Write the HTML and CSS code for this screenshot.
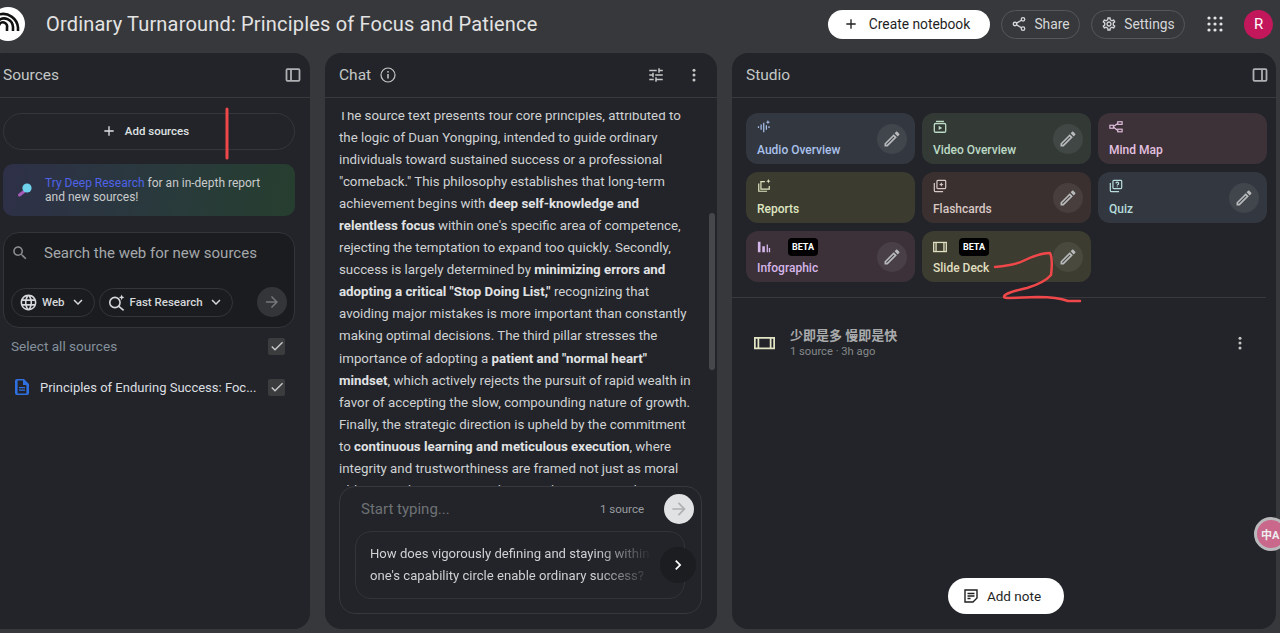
FILE: index.html
```html
<!DOCTYPE html>
<html lang="en">
<head>
    <meta charset="UTF-8">
    <title>Ordinary Turnaround: Principles of Focus and Patience</title>
    <link rel="stylesheet" href="styles.css">
</head>
<body>

    <svg class="defs" width="0" height="0">
        <symbol id="i-edit" viewBox="0 0 24 24"><path d="M14.06 9.02l.92.92L5.92 19H5v-.92l9.06-9.06M17.66 3c-.25 0-.51.1-.7.29l-1.83 1.83 3.75 3.75 1.83-1.83c.39-.39.39-1.02 0-1.41l-2.34-2.34c-.2-.2-.45-.29-.71-.29zm-3.6 3.19L3 17.25V21h3.75L17.81 9.94l-3.75-3.75z"/></symbol>
        <symbol id="i-check" viewBox="0 0 24 24"><path d="M9 16.17L4.83 12l-1.42 1.41L9 19 21 7l-1.41-1.41z"/></symbol>
        <symbol id="i-arrow" viewBox="0 0 24 24"><path d="M12 4l-1.41 1.41L16.17 11H4v2h12.17l-5.58 5.59L12 20l8-8z"/></symbol>
        <symbol id="i-down" viewBox="0 0 24 24"><path d="M16.59 8.59L12 13.17 7.41 8.59 6 10l6 6 6-6z"/></symbol>
        <symbol id="i-plus" viewBox="0 0 24 24"><path d="M19 13h-6v6h-2v-6H5v-2h6V5h2v6h6v2z"/></symbol>
        <symbol id="i-dots" viewBox="0 0 24 24"><circle cx="12" cy="5.5" r="2"/><circle cx="12" cy="12" r="2"/><circle cx="12" cy="18.5" r="2"/></symbol>
        <symbol id="i-slides" viewBox="0 0 24 16"><path fill-rule="evenodd" d="M0 1h24v14H0zM2 3v10h2V3zm4 0v10h12V3zm14 0v10h2V3z"/></symbol>
    </svg>

    <header class="topbar">
        <div class="logo">
            <svg viewBox="0 0 34 34" width="34" height="34" fill="none" stroke="#111" stroke-width="2.6">
                <path d="M8 13a9 9 0 0 1 14 7v4"/>
                <path d="M8 7.500a15 15 0 0 1 19 13v3.500"/>
                <path d="M8 18.500a4 4 0 0 1 8 2v3.500"/>
            </svg>
        </div>
        <h1 class="title">Ordinary Turnaround: Principles of Focus and Patience</h1>
        <button class="btn-create"><svg class="ic-16"><use href="#i-plus"/></svg>Create notebook</button>
        <button class="btn-outline btn-share">
            <svg class="ic-16" viewBox="0 0 24 24" fill="none" stroke="currentColor" stroke-width="2"><circle cx="18" cy="5" r="2.6"/><circle cx="6" cy="12" r="2.6"/><circle cx="18" cy="19" r="2.6"/><path d="M8.3 10.7l7.4-4.4M8.3 13.3l7.4 4.4"/></svg>
            Share
        </button>
        <button class="btn-outline btn-settings">
            <svg class="ic-16" viewBox="0 0 24 24"><path d="M19.43 12.98c.04-.32.07-.64.07-.98 0-.34-.03-.66-.07-.98l2.11-1.65c.19-.15.24-.42.12-.64l-2-3.46c-.09-.16-.26-.25-.44-.25-.06 0-.12.01-.17.03l-2.49 1c-.52-.4-1.08-.73-1.69-.98l-.38-2.65C14.46 2.18 14.25 2 14 2h-4c-.25 0-.46.18-.49.42l-.38 2.65c-.61.25-1.17.59-1.69.98l-2.49-1c-.06-.02-.12-.03-.18-.03-.17 0-.34.09-.43.25l-2 3.46c-.13.22-.07.49.12.64l2.11 1.65c-.04.32-.07.65-.07.98 0 .33.03.66.07.98l-2.11 1.65c-.19.15-.24.42-.12.64l2 3.46c.09.16.26.25.44.25.06 0 .12-.01.17-.03l2.49-1c.52.4 1.08.73 1.69.98l.38 2.65c.03.24.24.42.49.42h4c.25 0 .46-.18.49-.42l.38-2.65c.61-.25 1.17-.59 1.69-.98l2.49 1c.06.02.12.03.18.03.17 0 .34-.09.43-.25l2-3.46c.12-.22.07-.49-.12-.64l-2.11-1.65zm-1.98-1.71c.04.31.05.52.05.73 0 .21-.02.43-.05.73l-.14 1.13.89.7 1.08.84-.7 1.21-1.27-.51-1.04-.42-.9.68c-.43.32-.84.56-1.25.73l-1.06.43-.16 1.13-.2 1.35h-1.4l-.19-1.35-.16-1.13-1.06-.43c-.43-.18-.83-.41-1.23-.71l-.91-.7-1.06.43-1.27.51-.7-1.21 1.08-.84.89-.7-.14-1.13c-.03-.31-.05-.54-.05-.74s.02-.43.05-.73l.14-1.13-.89-.7-1.08-.84.7-1.21 1.27.51 1.04.42.9-.68c.43-.32.84-.56 1.25-.73l1.06-.43.16-1.13.2-1.35h1.39l.19 1.35.16 1.13 1.06.43c.43.18.83.41 1.23.71l.91.7 1.06-.43 1.27-.51.7 1.21-1.07.85-.89.7.14 1.13zM12 8c-2.21 0-4 1.79-4 4s1.79 4 4 4 4-1.79 4-4-1.79-4-4-4zm0 6c-1.1 0-2-.9-2-2s.9-2 2-2 2 .9 2 2-.9 2-2 2z"/></svg>
            Settings
        </button>
        <svg class="apps" viewBox="0 0 16 16" width="16" height="16"><circle cx="2" cy="2" r="1.6"/><circle cx="8" cy="2" r="1.6"/><circle cx="14" cy="2" r="1.6"/><circle cx="2" cy="8" r="1.6"/><circle cx="8" cy="8" r="1.6"/><circle cx="14" cy="8" r="1.6"/><circle cx="2" cy="14" r="1.6"/><circle cx="8" cy="14" r="1.6"/><circle cx="14" cy="14" r="1.6"/></svg>
        <div class="avatar">R</div>
    </header>

    <main class="panels">
        <!-- sources -->
        <section class="panel sources">
            <div class="panel-head">
                <h2>Sources</h2>
                <svg class="ic-head" viewBox="0 0 16 16" fill="none" stroke="currentColor" stroke-width="1.8"><rect x="1.5" y="2.2" width="13" height="11.6" rx="1"/><path d="M6 2.2v11.6"/></svg>
            </div>
            <div class="sources-body">
                <button class="add-sources"><svg class="ic-16"><use href="#i-plus"/></svg>Add sources</button>
                <div class="promo">
                    <svg class="promo-icon" viewBox="0 0 16 16" width="16" height="16"><path d="M7 9.5L2.5 13" stroke="#a45bb8" stroke-width="3" stroke-linecap="round"/><circle cx="10" cy="6" r="4.6" fill="#6fd3ee"/></svg>
                    <p><span class="promo-link">Try Deep Research</span> for an in-depth report<br>and new sources!</p>
                </div>
                <div class="search-box">
                    <div class="search-line">
                        <svg class="ic-search" viewBox="0 0 24 24"><path d="M15.5 14h-.79l-.28-.27C15.41 12.59 16 11.11 16 9.5 16 5.91 13.09 3 9.5 3S3 5.91 3 9.5 5.91 16 9.5 16c1.61 0 3.09-.59 4.23-1.57l.27.28v.79l5 4.99L20.49 19l-4.99-5zm-6 0C7.01 14 5 11.99 5 9.5S7.01 5 9.5 5 14 7.01 14 9.5 11.99 14 9.5 14z"/></svg>
                        <span>Search the web for new sources</span>
                    </div>
                    <div class="search-tools">
                        <button class="chip">
                            <svg class="ic-19" viewBox="0 0 24 24"><path d="M11.99 2C6.47 2 2 6.48 2 12s4.47 10 9.99 10C17.52 22 22 17.52 22 12S17.52 2 11.99 2zm6.93 6h-2.95c-.32-1.25-.78-2.45-1.38-3.56 1.84.63 3.37 1.91 4.33 3.56zM12 4.04c.83 1.2 1.48 2.53 1.91 3.96h-3.82c.43-1.43 1.08-2.76 1.91-3.96zM4.26 14C4.1 13.36 4 12.69 4 12s.1-1.36.26-2h3.38c-.08.66-.14 1.32-.14 2 0 .68.06 1.34.14 2H4.26zm.82 2h2.95c.32 1.25.78 2.45 1.38 3.56-1.84-.63-3.37-1.9-4.33-3.56zm2.95-8H5.08c.96-1.66 2.49-2.93 4.33-3.56C8.81 5.55 8.35 6.75 8.03 8zM12 19.96c-.83-1.2-1.48-2.53-1.91-3.96h3.82c-.43 1.43-1.08 2.76-1.91 3.96zM14.34 14H9.66c-.09-.66-.16-1.32-.16-2 0-.68.07-1.35.16-2h4.68c.09.65.16 1.32.16 2 0 .68-.07 1.34-.16 2zm.25 5.56c.6-1.11 1.06-2.31 1.38-3.56h2.95c-.96 1.65-2.49 2.93-4.33 3.56zM16.36 14c.08-.66.14-1.32.14-2 0-.68-.06-1.34-.14-2h3.38c.16.64.26 1.31.26 2s-.1 1.36-.26 2h-3.38z"/></svg>
                            Web
                            <svg class="ic-18"><use href="#i-down"/></svg>
                        </button>
                        <button class="chip">
                            <svg class="ic-19" viewBox="0 0 24 24" fill="none" stroke="currentColor" stroke-width="2"><circle cx="10" cy="12" r="6.5"/><path d="M15 17l6 5"/><path d="M18.5 2l1 2.5L22 5.5l-2.5 1-1 2.5-1-2.5-2.5-1 2.5-1z" fill="currentColor" stroke="none"/></svg>
                            Fast Research
                            <svg class="ic-18"><use href="#i-down"/></svg>
                        </button>
                        <button class="go"><svg class="ic-18"><use href="#i-arrow"/></svg></button>
                    </div>
                </div>
                <div class="check-row select-all">
                    <span>Select all sources</span>
                    <span class="checkbox"><svg class="ic-16"><use href="#i-check"/></svg></span>
                </div>
                <div class="check-row source-item">
                    <svg class="doc" viewBox="0 0 14 16" width="14" height="16"><path fill-rule="evenodd" d="M2 0h7l5 5v9a2 2 0 0 1-2 2H2a2 2 0 0 1-2-2V2a2 2 0 0 1 2-2zm.6 1.6v12.8h8.8V6H8V1.6zM4 8h6v1.2H4zm0 2.6h6v1.2H4z"/></svg>
                    <span class="source-name">Principles of Enduring Success: Foc...</span>
                    <span class="checkbox"><svg class="ic-16"><use href="#i-check"/></svg></span>
                </div>
            </div>
        </section>

        <!-- chat -->
        <section class="panel chat">
            <div class="panel-head">
                <h2>Chat</h2>
                <svg class="ic-info" viewBox="0 0 16 16" fill="none" stroke="currentColor" stroke-width="1.2"><circle cx="8" cy="8" r="7"/><path d="M8 7v4.4" stroke-width="1.5"/><circle cx="8" cy="4.8" r=".9" fill="currentColor" stroke="none"/></svg>
                <svg class="ic-tune" viewBox="0 0 24 24"><path d="M3 17v2h6v-2H3zM3 5v2h10V5H3zm10 16v-2h8v-2h-8v-2h-2v6h2zM7 9v2H3v2h4v2h2V9H7zm14 4v-2H11v2h10zm-6-4h2V7h4V5h-4V3h-2v6z"/></svg>
                <svg class="ic-dots"><use href="#i-dots"/></svg>
            </div>
            <div class="chat-scroll">
                <p class="chat-text">
                    The source text presents four core principles, attributed to<br>
                    the logic of Duan Yongping, intended to guide ordinary<br>
                    individuals toward sustained success or a professional<br>
                    "comeback." This philosophy establishes that long-term<br>
                    achievement begins with <b>deep self-knowledge and</b><br>
                    <b>relentless focus</b> within one's specific area of competence,<br>
                    rejecting the temptation to expand too quickly. Secondly,<br>
                    success is largely determined by <b>minimizing errors and</b><br>
                    <b>adopting a critical "Stop Doing List,"</b> recognizing that<br>
                    avoiding major mistakes is more important than constantly<br>
                    making optimal decisions. The third pillar stresses the<br>
                    importance of adopting a <b>patient and "normal heart"</b><br>
                    <b>mindset</b>, which actively rejects the pursuit of rapid wealth in<br>
                    favor of accepting the slow, compounding nature of growth.<br>
                    Finally, the strategic direction is upheld by the commitment<br>
                    to <b>continuous learning and meticulous execution</b>, where<br>
                    integrity and trustworthiness are framed not just as moral<br>
                    obligations but as essential assets that compound over time.
                </p>
                <div class="scroll-thumb"></div>
            </div>
            <div class="composer">
                <div class="composer-top">
                    <span class="placeholder">Start typing...</span>
                    <span class="source-count">1 source</span>
                    <button class="send"><svg class="ic-20"><use href="#i-arrow"/></svg></button>
                </div>
                <div class="suggestion">
                    <p>How does vigorously defining and staying within<br>one's capability circle enable ordinary success?</p>
                    <button class="next"><svg class="ic-20" viewBox="0 0 24 24"><path d="M10 6L8.59 7.41 13.17 12l-4.58 4.59L10 18l6-6z"/></svg></button>
                </div>
            </div>
        </section>

        <!-- studio -->
        <section class="panel studio">
            <div class="panel-head">
                <h2>Studio</h2>
                <svg class="ic-head" viewBox="0 0 16 16" fill="none" stroke="currentColor" stroke-width="1.8"><rect x="1.5" y="2.2" width="13" height="11.6" rx="1"/><path d="M10 2.2v11.6"/></svg>
            </div>
            <div class="tiles">
                <div class="tile t-audio">
                    <div class="tile-main">
                        <div class="tile-top"><svg class="tile-icon" viewBox="0 0 16 16"><path d="M1 7h1.4v2H1zm3-2h1.4v6H4zm3-2h1.4v11H7zm3 3h1.4v5H10zm3 1h1.4v2H13zM12.500 0l.7 1.800L15 2.500l-1.800.7-.7 1.800-.7-1.800L10 2.500l1.800-.7z"/></svg></div>
                        <span class="tile-label">Audio Overview</span>
                    </div>
                    <button class="edit"><svg class="ic-20"><use href="#i-edit"/></svg></button>
                </div>
                <div class="tile t-video">
                    <div class="tile-main">
                        <div class="tile-top"><svg class="tile-icon" viewBox="0 0 16 16" fill="none" stroke="currentColor" stroke-width="1.500"><rect x="1.500" y="4" width="13" height="10" rx="1.500"/><path d="M3.500 1.500h9"/><path d="M6.500 6.500v5l4-2.500z" fill="currentColor" stroke="none"/></svg></div>
                        <span class="tile-label">Video Overview</span>
                    </div>
                    <button class="edit"><svg class="ic-20"><use href="#i-edit"/></svg></button>
                </div>
                <div class="tile t-mind">
                    <div class="tile-main">
                        <div class="tile-top"><svg class="tile-icon" viewBox="0 0 16 16" fill="none" stroke="currentColor" stroke-width="1.300"><rect x="1" y="6" width="4" height="3.400"/><rect x="10" y="2" width="5" height="3"/><rect x="10" y="10.500" width="5" height="3"/><path d="M5 7.500L10 4M5 8l5 4"/></svg></div>
                        <span class="tile-label">Mind Map</span>
                    </div>
                </div>
                <div class="tile t-reports">
                    <div class="tile-main">
                        <div class="tile-top"><svg class="tile-icon" viewBox="0 0 16 16" fill="none" stroke="currentColor" stroke-width="1.400"><path d="M9 3H4.500v8.500H14V8"/><path d="M2 5v9h9.500"/><path d="M13 0l.7 1.800 1.800.7-1.800.7-.7 1.800-.7-1.800-1.800-.7 1.800-.7z" fill="currentColor" stroke="none"/></svg></div>
                        <span class="tile-label">Reports</span>
                    </div>
                </div>
                <div class="tile t-flash">
                    <div class="tile-main">
                        <div class="tile-top"><svg class="tile-icon" viewBox="0 0 16 16" fill="none" stroke="currentColor" stroke-width="1.400"><rect x="4.500" y="1.500" width="10" height="9.500" rx="1"/><path d="M1.500 4.500V13a1.500 1.500 0 0 0 1.500 1.500h8.500"/><path d="M9.500 3.800l.8 1.700 1.700.8-1.700.8-.8 1.700-.8-1.700L7 6.300l1.700-.8z" fill="currentColor" stroke="none"/></svg></div>
                        <span class="tile-label">Flashcards</span>
                    </div>
                    <button class="edit"><svg class="ic-20"><use href="#i-edit"/></svg></button>
                </div>
                <div class="tile t-quiz">
                    <div class="tile-main">
                        <div class="tile-top"><svg class="tile-icon" viewBox="0 0 16 16" fill="none" stroke="currentColor" stroke-width="1.400"><rect x="4.500" y="1.500" width="10" height="9.500" rx="1"/><path d="M1.500 4.500V13a1.500 1.500 0 0 0 1.500 1.500h8.500"/><path d="M8 5a1.500 1.500 0 1 1 2 1.500c-.4.200-.5.500-.5 1"/><path d="M9.500 8.500v1"/></svg></div>
                        <span class="tile-label">Quiz</span>
                    </div>
                    <button class="edit"><svg class="ic-20"><use href="#i-edit"/></svg></button>
                </div>
                <div class="tile t-info">
                    <div class="tile-main">
                        <div class="tile-top">
                            <svg class="tile-icon" viewBox="0 0 16 16"><path d="M1 2h3v12H1zm5 5h3v7H6zm5-2h1.500v9H11zm2.500 4H15v5h-1.500z"/></svg>
                            <span class="beta">BETA</span>
                        </div>
                        <span class="tile-label">Infographic</span>
                    </div>
                    <button class="edit"><svg class="ic-20"><use href="#i-edit"/></svg></button>
                </div>
                <div class="tile t-slide">
                    <div class="tile-main">
                        <div class="tile-top">
                            <svg class="tile-icon" viewBox="0 0 16 16" fill="none" stroke="currentColor" stroke-width="1.500"><rect x=".8" y="2.800" width="14.400" height="10.400"/><path d="M3.500 2.800v10.400M12.500 2.800v10.400"/></svg>
                            <span class="beta">BETA</span>
                        </div>
                        <span class="tile-label">Slide Deck</span>
                    </div>
                    <button class="edit"><svg class="ic-20"><use href="#i-edit"/></svg></button>
                </div>
            </div>
            <div class="studio-rule"></div>
            <div class="note-row">
                <svg class="note-icon"><use href="#i-slides"/></svg>
                <div class="note-text">
                    <div class="note-title">少即是多 慢即是快</div>
                    <div class="note-sub">1 source · 3h ago</div>
                </div>
                <svg class="ic-dots"><use href="#i-dots"/></svg>
            </div>
            <button class="add-note">
                <svg class="ic-16" viewBox="0 0 16 16" fill="none" stroke="currentColor" stroke-width="1.400"><path d="M2 2h12v8l-4 4H2z"/><path d="M4.500 5.500h7M4.500 8h7M4.500 10.500h3"/></svg>
                Add note
            </button>
        </section>
    </main>

    <!-- translate extension bubble -->
    <div class="translate-bubble"><span>中A</span></div>

    <!-- red pen marks on the screenshot -->
    <svg class="pen-marks" viewBox="0 0 1280 633" width="1280" height="633" fill="none" stroke="#f0484a" stroke-linecap="round" stroke-linejoin="round">
        <path d="M227 109v49" stroke-width="3"/>
        <path d="M995 267c10-1 20-2 28-6 10-5 20-8 27-8 2 4 2 14 1 22-6 7-14 10-24 13-8 2-16 3-22 7-2 2-1 3 3 3l30-1c12 0 22 1 30 4l12 0" stroke-width="2.500"/>
    </svg>

</body>
</html>
```

FILE: styles.css
```css
* {
    box-sizing: border-box;
}
html, body {
    height: 100%;
}
body {
    margin: 0;
    background-color: #37383b;
    color: #e3e3e3;
    font-family: Roboto, "Noto Sans CJK SC", sans-serif;
    overflow: hidden;
    position: relative;
}
button {
    font-family: inherit;
    cursor: pointer;
}
svg {
    flex: none;
}
svg:not([fill]) {
    fill: currentColor;
}
.defs {
    position: absolute;
}
h1, h2, p {
    margin: 0;
    font-weight: 400;
}
.ic-16 { width: 16px; height: 16px; }
.ic-18 { width: 18px; height: 18px; }
.ic-19 { width: 19px; height: 19px; }
.ic-20 { width: 20px; height: 20px; }

/* top bar */
.topbar {
    height: 48px;
    margin-bottom: 5px;
    display: flex;
    align-items: center;
    padding-right: 7px;
}
.logo {
    width: 34px;
    height: 34px;
    border-radius: 50%;
    background-color: #fff;
    margin-left: -9px;
    margin-right: 21px;
    overflow: hidden;
}
.logo svg {
    display: block;
}
.title {
    font-size: 20px;
    color: #e3e3e3;
    flex: 1;
    letter-spacing: 0.18px;
}
.btn-create {
    width: 162px;
    height: 29px;
    border: none;
    border-radius: 15px;
    background-color: #fff;
    color: #1f1f1f;
    font-size: 13.8px;
    display: flex;
    align-items: center;
    justify-content: center;
    gap: 10px;
    margin-right: 11px;
    padding: 0 5px 0 0;
}
.btn-outline {
    height: 29px;
    border: 1px solid #55575a;
    border-radius: 15px;
    background: none;
    color: #d5d7d9;
    font-size: 13.8px;
    display: flex;
    align-items: center;
    justify-content: center;
    gap: 7px;
}
.btn-share {
    width: 79px;
    margin-right: 11px;
}
.btn-settings {
    width: 94px;
}
.apps {
    color: #e3e3e3;
    margin-left: 22px;
    margin-right: 21px;
}
.avatar {
    width: 29px;
    height: 29px;
    border-radius: 50%;
    background-color: #c2185b;
    color: #fff;
    font-size: 15px;
    display: flex;
    align-items: center;
    justify-content: center;
}

/* panels */
.panels {
    display: flex;
    gap: 15px;
    height: 576px;
    margin-left: -13px;
    margin-right: 4px;
}
.panel {
    background-color: #222429;
    border-radius: 16px;
    display: flex;
    flex-direction: column;
    overflow: hidden;
    position: relative;
}
.sources { width: 323px; }
.chat { width: 392px; }
.studio { flex: 1; }
.panel-head {
    height: 45px;
    flex: none;
    display: flex;
    align-items: center;
    padding: 0 14px;
    border-bottom: 1px solid #37393c;
    color: #c4c7c5;
}
.panel-head h2 {
    font-size: 15.5px;
    color: #c4c7c5;
}
.sources .panel-head {
    padding-left: 16px;
    justify-content: space-between;
    padding-right: 9px;
}
.studio .panel-head {
    justify-content: space-between;
    padding-right: 8px;
}
.ic-head {
    width: 16px;
    height: 16px;
    color: #aeb0b3;
}
.ic-info {
    width: 16px;
    height: 16px;
    margin-left: 9px;
}
.ic-tune {
    width: 18px;
    height: 18px;
    margin-left: auto;
    margin-right: 20px;
}
.ic-dots {
    width: 18px;
    height: 18px;
    color: #c4c7c5;
}

/* sources */
.sources-body {
    padding: 15px 15px 0 16px;
}
.add-sources {
    width: 100%;
    height: 37px;
    border: 1px solid #35373a;
    border-radius: 19px;
    background: none;
    color: #dfe1e3;
    font-size: 11.5px;
    font-weight: 500;
    display: flex;
    align-items: center;
    justify-content: center;
    gap: 8px;
    padding: 0 8px 1px 0;
}
.promo {
    height: 52px;
    margin-top: 14px;
    border-radius: 10px;
    background: linear-gradient(100deg, #2e3048, #293a3c 55%, #263e2f);
    display: flex;
    align-items: center;
    padding-left: 14px;
    font-size: 12px;
    line-height: 14.5px;
    color: #c9cbcc;
}
.promo-icon {
    margin-right: 12px;
}
.promo-link {
    color: #4f63e8;
}
.search-box {
    margin-top: 16px;
    height: 96px;
    background-color: #1a1c20;
    border: 1px solid #33353a;
    border-radius: 16px;
    padding: 0 7px;
}
.search-line {
    height: 40px;
    display: flex;
    align-items: center;
    font-size: 15px;
    color: #a5a8aa;
}
.ic-search {
    width: 18px;
    height: 18px;
    margin-right: 15px;
    color: #8a8d8f;
}
.search-tools {
    margin-top: 14px;
    display: flex;
    align-items: center;
    gap: 4px;
}
.chip {
    height: 29px;
    border: 1px solid #34363a;
    border-radius: 15px;
    background: none;
    color: #d6d8da;
    font-size: 11.5px;
    font-weight: 500;
    display: flex;
    align-items: center;
    gap: 4px;
    padding: 0 7px;
    white-space: nowrap;
}
.go {
    width: 30px;
    height: 30px;
    border: none;
    border-radius: 50%;
    background-color: #333538;
    color: #75787a;
    margin-left: auto;
    display: flex;
    align-items: center;
    justify-content: center;
    padding: 0;
}
.check-row {
    display: flex;
    align-items: center;
    padding: 0 10px 0 8px;
}
.select-all {
    height: 18px;
    margin-top: 9px;
    justify-content: space-between;
    font-size: 13.6px;
    color: #84909c;
}
.source-item {
    margin-top: 23px;
    height: 18px;
    padding-left: 12px;
    font-size: 13px;
    color: #dcdee0;
}
.doc {
    color: #2f6fe0;
    margin-right: 11px;
}
.source-name {
    flex: 1;
    white-space: nowrap;
}
.checkbox {
    width: 17px;
    height: 17px;
    border-radius: 2px;
    background-color: #3b3c3e;
    color: #c8cacc;
    display: flex;
    align-items: center;
    justify-content: center;
}

/* chat */
.chat-scroll {
    flex: 1;
    min-height: 0;
    position: relative;
    overflow: hidden;
    margin-top: 14px;
}
.chat-text {
    padding: 0 14px;
    margin-top: -7px;
    font-size: 13.3px;
    line-height: 22.05px;
    color: #d0d2d4;
    white-space: nowrap;
}
.chat-text b {
    font-weight: 700;
    color: #e0e2e4;
}
.scroll-thumb {
    position: absolute;
    right: 2px;
    top: 101px;
    width: 6px;
    height: 157px;
    border-radius: 3px;
    background-color: #45474a;
}
.composer {
    flex: none;
    height: 128px;
    margin: 0 15px 15px 14px;
    border: 1px solid #36383b;
    border-radius: 16px;
    padding: 0 3px 0 15px;
    background-color: #222429;
}
.composer-top {
    height: 43px;
    display: flex;
    align-items: center;
}
.placeholder {
    font-size: 15px;
    color: #6f7275;
    margin-left: 6px;
    flex: 1;
}
.source-count {
    font-size: 11.5px;
    color: #9a9da0;
    margin-right: 20px;
}
.send {
    width: 30px;
    height: 30px;
    border: none;
    border-radius: 50%;
    background-color: #e1e2e3;
    color: #aeb0b2;
    padding: 0;
    margin-right: 4px;
    display: flex;
    align-items: center;
    justify-content: center;
}
.suggestion {
    height: 68px;
    margin-top: 1px;
    border: 1px solid #32343a;
    border-radius: 16px;
    padding-left: 14px;
    display: flex;
    align-items: center;
    position: relative;
    width: 330px;
}
.suggestion p {
    font-size: 13.1px;
    line-height: 22px;
    color: #cfd1d3;
    white-space: nowrap;
    width: 282px;
    overflow: hidden;
    -webkit-mask-image: linear-gradient(to right, #000 80%, transparent 100%);
    mask-image: linear-gradient(to right, #000 80%, transparent 100%);
}
.next {
    position: absolute;
    right: -12px;
    top: 15px;
    width: 36px;
    height: 36px;
    border: none;
    border-radius: 50%;
    background-color: #1b1d20;
    color: #fff;
    padding: 0;
    display: flex;
    align-items: center;
    justify-content: center;
}

/* studio */
.tiles {
    display: grid;
    grid-template-columns: repeat(3, 169px);
    grid-auto-rows: 51px;
    gap: 8px 7px;
    padding: 15px 0 0 14px;
}
.tile {
    border-radius: 12px;
    display: flex;
    align-items: center;
    justify-content: space-between;
    padding: 0 8px 0 11px;
}
.tile-main {
    display: flex;
    flex-direction: column;
    gap: 8px;
    padding-bottom: 1px;
}
.tile-top {
    height: 15px;
    display: flex;
    align-items: center;
}
.t-info .tile-top,
.t-slide .tile-top {
    margin-top: 2px;
    margin-bottom: -2px;
}
.tile-icon {
    width: 14px;
    height: 14px;
}
.tile-label {
    font-size: 12px;
    font-weight: 500;
    white-space: nowrap;
}
.beta {
    background-color: #000;
    color: #fff;
    font-size: 9px;
    font-weight: 700;
    border-radius: 4px;
    width: 30px;
    height: 18px;
    line-height: 18px;
    text-align: center;
    margin-left: 17px;
}
.t-slide .beta {
    margin-left: 12px;
}
.edit {
    width: 30px;
    height: 30px;
    border: none;
    border-radius: 50%;
    background-color: rgba(255, 255, 255, 0.07);
    color: #b8babc;
    padding: 0;
    display: flex;
    align-items: center;
    justify-content: center;
}
.t-audio { background-color: #33373f; color: #a9c1ec; }
.t-video { background-color: #333a36; color: #bcd9c4; }
.t-mind { background-color: #3d3238; color: #e5c1e0; }
.t-reports { background-color: #3b3b30; color: #dfe6c0; }
.t-flash { background-color: #3a302f; color: #d8c8c4; }
.t-quiz { background-color: #333840; color: #b6dcdc; }
.t-info { background-color: #3c3138; color: #d5b6ea; }
.t-slide { background-color: #3c3c30; color: #e0dfc0; }
.studio-rule {
    height: 1px;
    background-color: #37393c;
    margin: 15px 10px 0 0;
}
.note-row {
    display: flex;
    align-items: center;
    padding: 29px 27px 0 22px;
}
.note-icon {
    width: 21px;
    height: 14px;
    color: #e3e4c4;
    margin-right: 15px;
}
.note-text {
    flex: 1;
}
.note-title {
    font-size: 13px;
    font-weight: 700;
    color: #a9abad;
    line-height: 17px;
}
.note-sub {
    font-size: 11.2px;
    color: #85888a;
    line-height: 15px;
}
.add-note {
    position: absolute;
    left: 216px;
    bottom: 15px;
    width: 116px;
    height: 36px;
    border: none;
    border-radius: 18px;
    background-color: #fff;
    color: #1f1f1f;
    font-size: 13.5px;
    display: flex;
    align-items: center;
    justify-content: center;
    gap: 8px;
    padding: 0 8px 0 0;
}

/* things lying over the page */
.translate-bubble {
    position: absolute;
    left: 1254px;
    top: 517px;
    width: 34px;
    height: 34px;
    border-radius: 50%;
    border: 3px solid #b9b9bb;
    background-color: #c9688b;
    color: #eee;
    font-size: 11px;
    font-weight: 700;
    display: flex;
    align-items: center;
    padding-left: 4px;
    white-space: nowrap;
}
.pen-marks {
    position: absolute;
    left: 0;
    top: 0;
    pointer-events: none;
}
```
